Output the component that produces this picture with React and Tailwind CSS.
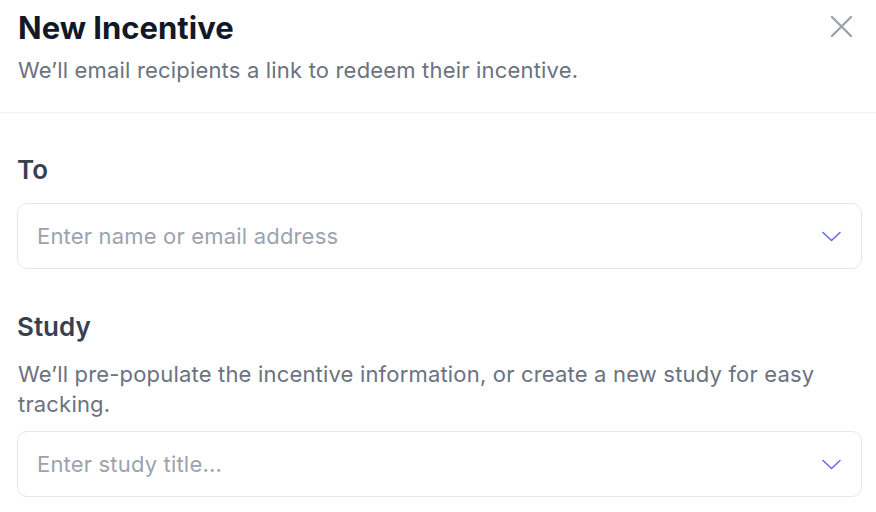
import React from "react";

function Chevron() {
  return (
    <svg width="19" height="11" viewBox="0 0 19 11" fill="none" className="shrink-0">
      <path d="M1 1.5L9.5 9.5L18 1.5" stroke="#6366f1" strokeWidth="1.5" strokeLinecap="round" strokeLinejoin="round" />
    </svg>
  );
}

function SelectBox({ placeholder }) {
  return (
    <div className="flex items-center justify-between h-[66px] rounded-[10px] border border-[#e5e7eb] bg-white pl-[19px] pr-[20px]">
      <span className="text-[22px] tracking-[0.18px] text-[#9ca3af]">{placeholder}</span>
      <Chevron />
    </div>
  );
}

export default function App() {
  return (
    <div className="w-[876px] h-[512px] bg-white overflow-hidden" style={{ fontFamily: "Inter, 'Noto Sans', sans-serif" }}>
      <div className="flex items-start justify-between pl-[18px] pr-[23px] pt-2 pb-[27px] border-b border-[#f1f2f4]">
        <div>
          <h1 className="text-[31px] leading-[40px] font-bold text-[#111827]">New Incentive</h1>
          <p className="mt-[7px] text-[22px] leading-[30px] tracking-[0.18px] text-[#6b7280]">
            We’ll email recipients a link to redeem their incentive.
          </p>
        </div>
        <button className="mt-[7px] text-[#9ca3af]">
          <svg width="23" height="23" viewBox="0 0 23 23" fill="none">
            <path d="M2 2L21 21M21 2L2 21" stroke="currentColor" strokeWidth="2.4" strokeLinecap="round" />
          </svg>
        </button>
      </div>

      <div className="pl-[17px] pr-[14px] pt-[41px]">
        <label className="block text-[26px] leading-[32px] font-semibold text-[#374151]">To</label>
        <div className="mt-[17px]">
          <SelectBox placeholder="Enter name or email address" />
        </div>

        <label className="block mt-[42px] text-[26px] leading-[32px] font-semibold text-[#374151]">Study</label>
        <p className="mt-4 pl-px text-[22px] leading-[30px] tracking-[0.18px] text-[#6b7280]">
          We’ll pre-populate the incentive information, or create a new study for easy tracking.
        </p>
        <div className="mt-3">
          <SelectBox placeholder="Enter study title..." />
        </div>
      </div>
    </div>
  );
}
